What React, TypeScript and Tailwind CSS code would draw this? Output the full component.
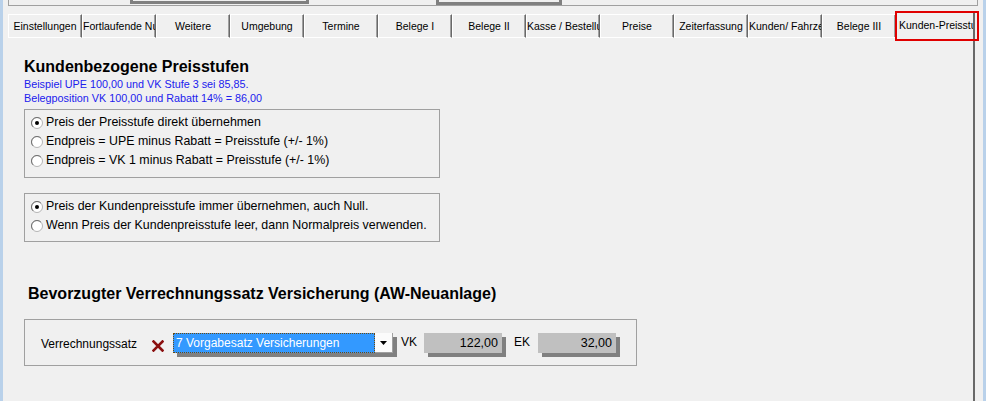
import React from 'react';

const tabs = [
  'Einstellungen',
  'Fortlaufende Nummern',
  'Weitere',
  'Umgebung',
  'Termine',
  'Belege I',
  'Belege II',
  'Kasse / Bestellung',
  'Preise',
  'Zeiterfassung',
  'Kunden/ Fahrzeuge',
  'Belege III',
];

const Radio: React.FC<{ checked?: boolean; label: string }> = ({ checked, label }) => (
  <div className="flex items-center h-[19px]">
    <svg width="12" height="12" viewBox="0 0 12 12" className="ml-[6px] shrink-0">
      <circle cx="6" cy="6" r="5.5" fill="#fff" stroke="#b4b4b4" />
      <path d="M2.1 9.9 A5.5 5.5 0 0 1 9.9 2.1" fill="none" stroke="#707070" />
      {checked && <circle cx="6" cy="6" r="2" fill="#000" />}
    </svg>
    <span className="ml-[3px] text-[12.4px] leading-[19px] text-black whitespace-nowrap">{label}</span>
  </div>
);

const App: React.FC = () => {
  return (
    <div className="w-[986px] h-[401px] bg-[#f0f0f0] flex overflow-hidden font-['Liberation_Sans',Arial,sans-serif]">
      {/* window edge */}
      <div className="w-[3px] bg-[#b9d1ea] shrink-0" />

      <div className="flex-1 flex flex-col pl-[5px]">
        {/* bottom of the upper frame */}
        <div className="w-[970px] h-[6px] border-x border-b border-[#a0a0a0] flex shrink-0">
          <div className="ml-[121px] w-[179px] h-[4px] border-x-[3px] border-b-[3px] border-[#808080]" />
          <div className="ml-[127px] w-[126px] h-[5px] border-x-[3px] border-b-[3px] border-[#808080]" />
        </div>

        {/* tabs */}
        <div className="mt-[5px] flex items-end h-[27px] shrink-0">
          {tabs.map((t) => (
            <div
              key={t}
              className="w-[74px] h-[24px] shrink-0 border-t border-l border-b border-white border-r border-r-[#696969] shadow-[inset_-1px_0_0_#a0a0a0] overflow-hidden whitespace-nowrap text-center text-[10.5px] leading-[22px] text-black"
            >
              {t}
            </div>
          ))}
          <div className="relative w-[79px] h-[27px] shrink-0 border-t border-l border-white border-r-2 border-r-[#696969] overflow-hidden whitespace-nowrap pl-[2px] text-[10.5px] leading-[26px] text-black">
            Kunden-Preisstufen
          </div>
        </div>

        {/* panel */}
        <div className="relative w-[967px] flex-1 border-r-2 border-r-[#696969] pl-[16px] pt-[19px]">
          <div className="absolute left-[887px] -top-[27px] w-[84px] h-[30px] border-2 border-[#e00000]" />

          <div className="text-[16px] leading-[20px] font-bold text-black">Kundenbezogene Preisstufen</div>
          <div className="text-[10.8px] leading-[14px] text-[#2020ee]">
            <div>Beispiel UPE 100,00 und VK Stufe 3 sei 85,85.</div>
            <div>Belegposition VK 100,00 und Rabatt 14% = 86,00</div>
          </div>

          <div className="mt-[4px] w-[416px] h-[69px] border border-[#a0a0a0] pt-[3px]">
            <Radio checked label="Preis der Preisstufe direkt übernehmen" />
            <Radio label="Endpreis = UPE minus Rabatt = Preisstufe (+/- 1%)" />
            <Radio label="Endpreis = VK 1 minus Rabatt = Preisstufe (+/- 1%)" />
          </div>

          <div className="mt-[15px] w-[416px] h-[49px] border border-[#a0a0a0] pt-[3px]">
            <Radio checked label="Preis der Kundenpreisstufe immer übernehmen, auch Null." />
            <Radio label="Wenn Preis der Kundenpreisstufe leer, dann Normalpreis verwenden." />
          </div>

          <div className="mt-[42px] ml-[4px] text-[16px] leading-[20px] font-bold text-black whitespace-nowrap">
            Bevorzugter Verrechnungssatz Versicherung (AW-Neuanlage)
          </div>

          <div className="mt-[15px] w-[613px] h-[47px] border border-[#a0a0a0] pt-[13px] pl-[16px] flex items-start">
            <div className="w-[98px] mt-[1px] text-[12px] leading-[20px] text-black whitespace-nowrap">Verrechnungssatz</div>

            <svg width="12" height="12" viewBox="0 0 12 12" className="ml-[13px] mt-[7px] shrink-0">
              <path d="M1.5 1.5 L10.5 10.5 M10.5 1.5 L1.5 10.5" stroke="#8b1010" strokeWidth="2.6" strokeLinecap="square" />
            </svg>

            <div className="ml-[9px] flex h-[20px] shadow-[4px_4px_0_#808080]">
              <div className="w-[202px] h-[20px] bg-[#3399ff] border border-dotted border-[#6b4a10] pl-[2px] text-[12px] leading-[18px] text-white whitespace-nowrap overflow-hidden">
                7 Vorgabesatz Versicherungen
              </div>
              <div className="w-[18px] h-[20px] bg-[#fbfbfb] border-r border-b border-[#a0a0a0] flex items-center justify-center">
                <svg width="7" height="4" viewBox="0 0 7 4">
                  <path d="M0 0 H7 L3.5 4 Z" fill="#000" />
                </svg>
              </div>
            </div>

            <div className="ml-[8px] w-[23px] -mt-[1px] text-[12px] leading-[20px] text-black">VK</div>
            <div className="w-[78px] h-[20px] bg-[#c0c0c0] shadow-[4px_4px_0_#808080] pr-[4px] text-right text-[12.5px] leading-[20px] text-black">
              122,00
            </div>

            <div className="ml-[12px] w-[24px] -mt-[1px] text-[12px] leading-[20px] text-black">EK</div>
            <div className="w-[78px] h-[20px] bg-[#c0c0c0] shadow-[4px_4px_0_#808080] pr-[4px] text-right text-[12.5px] leading-[20px] text-black">
              32,00
            </div>
          </div>
        </div>
      </div>

      <div className="w-[3px] bg-[#b9d1ea] shrink-0" />
    </div>
  );
};

export default App;
